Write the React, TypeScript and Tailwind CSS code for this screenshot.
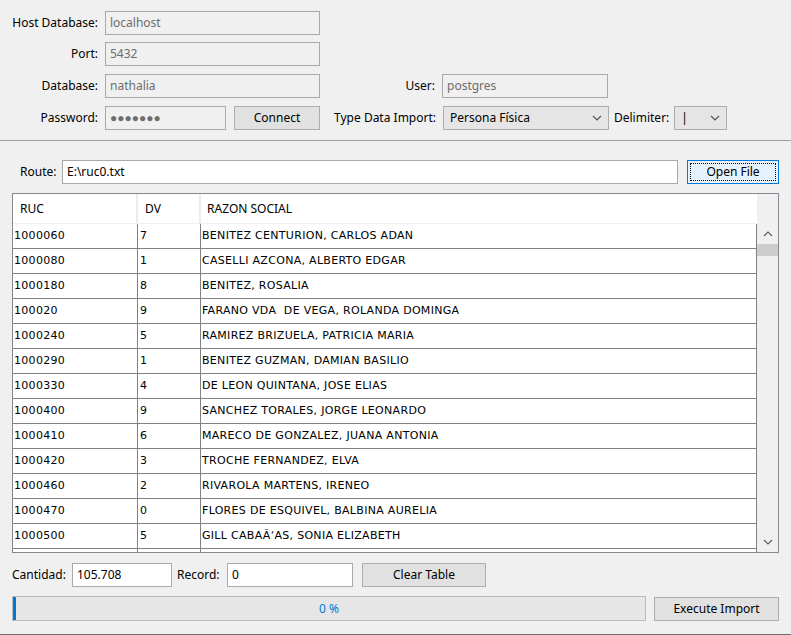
import React from "react";

const rows: [string, string, string][] = [
  ["1000060", "7", "BENITEZ CENTURION, CARLOS ADAN"],
  ["1000080", "1", "CASELLI AZCONA, ALBERTO EDGAR"],
  ["1000180", "8", "BENITEZ, ROSALIA"],
  ["100020", "9", "FARANO VDA  DE VEGA, ROLANDA DOMINGA"],
  ["1000240", "5", "RAMIREZ BRIZUELA, PATRICIA MARIA"],
  ["1000290", "1", "BENITEZ GUZMAN, DAMIAN BASILIO"],
  ["1000330", "4", "DE LEON QUINTANA, JOSE ELIAS"],
  ["1000400", "9", "SANCHEZ TORALES, JORGE LEONARDO"],
  ["1000410", "6", "MARECO DE GONZALEZ, JUANA ANTONIA"],
  ["1000420", "3", "TROCHE FERNANDEZ, ELVA"],
  ["1000460", "2", "RIVAROLA MARTENS, IRENEO"],
  ["1000470", "0", "FLORES DE ESQUIVEL, BALBINA AURELIA"],
  ["1000500", "5", "GILL CABAÃ‘AS, SONIA ELIZABETH"],
  ["", "", ""], // next row, only its top edge shows
];

// small chevron used by combos and the scrollbar
function Chevron({ up = false, className = "" }: { up?: boolean; className?: string }) {
  return (
    <svg width="10" height="6" viewBox="0 0 10 6" className={className}>
      <path
        d={up ? "M1 5 L5 1 L9 5" : "M1 1 L5 5 L9 1"}
        fill="none"
        stroke="currentColor"
        strokeWidth="1.2"
      />
    </svg>
  );
}

function Label({ text, w }: { text: string; w: string }) {
  return <div className={`${w} shrink-0 text-right pr-[7px] leading-6`}>{text}</div>;
}

function Field({ value, w, disabled = false }: { value: string; w: string; disabled?: boolean }) {
  return (
    <div
      className={`${w} h-6 shrink-0 border px-[4px] leading-[22px] ${
        disabled ? "border-[#a9a9a9] bg-[#f0f0f0] text-[#6d6d6d]" : "border-[#a9a9a9] bg-white text-black"
      }`}
    >
      {value}
    </div>
  );
}

function Button({ text, w, className = "" }: { text: string; w: string; className?: string }) {
  return (
    <div
      className={`${w} h-6 shrink-0 border border-[#adadad] bg-[#e1e1e1] text-center leading-[22px] ${className}`}
    >
      {text}
    </div>
  );
}

function Combo({ value, w }: { value: string; w: string }) {
  return (
    <div
      className={`${w} h-6 shrink-0 border border-[#acacac] bg-[#e5e5e5] flex items-center pl-[6px] pr-[6px]`}
    >
      <span className="flex-1">{value}</span>
      <Chevron className="text-[#555]" />
    </div>
  );
}

export default function App() {
  return (
    <div
      className="w-[791px] h-[635px] bg-[#f0f0f0] text-[12px] text-black overflow-hidden border-b border-[#6e6e6e]"
      style={{ fontFamily: '"Noto Sans", "Segoe UI", sans-serif' }}
    >
      {/* connection panel */}
      <div className="pt-[11px] pb-[10px] border-b border-[#a0a0a0] flex flex-col gap-[8px]">
        <div className="flex">
          <Label text="Host Database:" w="w-[105px]" />
          <Field value="localhost" w="w-[215px]" disabled />
        </div>
        <div className="flex -mt-[1px]">
          <Label text="Port:" w="w-[105px]" />
          <Field value="5432" w="w-[215px]" disabled />
        </div>
        <div className="flex">
          <Label text="Database:" w="w-[105px]" />
          <Field value="nathalia" w="w-[215px]" disabled />
          <Label text="User:" w="w-[122px]" />
          <Field value="postgres" w="w-[166px]" disabled />
        </div>
        <div className="flex">
          <Label text="Password:" w="w-[105px]" />
          <Field value="●●●●●●●" w="w-[121px]" disabled />
          <Button text="Connect" w="w-[86px]" className="ml-[8px]" />
          <Label text="Type Data Import:" w="w-[123px]" />
          <Combo value="Persona Física" w="w-[166px]" />
          <div className="ml-[5px] pr-[5px] leading-6">Delimiter:</div>
          <Combo value="|" w="w-[53px]" />
        </div>
      </div>

      {/* route */}
      <div className="flex items-center mt-[19px] pl-[20px]">
        <div className="w-[42px] leading-6">Route:</div>
        <Field value="E:\ruc0.txt" w="w-[616px]" />
        <div className="ml-[9px] w-[92px] h-6 border border-[#0078d7] bg-[#e5f1fb] p-[2px]">
          <div className="h-full border border-dotted border-black text-center leading-[16px]">Open File</div>
        </div>
      </div>

      {/* table */}
      <div className="mx-[12px] mt-[9px] h-[360px] border border-[#828790] flex bg-white">
        <div className="w-[744px] flex flex-col">
          <div className="h-[30px] flex border-b border-[#f0f0f0] shrink-0">
            <div className="w-[125px] pl-[7px] leading-[30px] border-r-2 border-[#ebebeb]">RUC</div>
            <div className="w-[63px] pl-[7px] leading-[30px] border-r-2 border-[#ebebeb]">DV</div>
            <div className="flex-1 pl-[6px] leading-[30px]">RAZON SOCIAL</div>
          </div>
          <div
            className="flex-1 overflow-hidden border-r border-[#808080] text-[11px] tracking-[0.3px]"
            style={{ fontFamily: '"DejaVu Sans", Tahoma, sans-serif' }}
          >
            {rows.map((r, i) => (
              <div key={i} className="h-[25px] flex border-b border-[#808080] shrink-0">
                <div className="w-[125px] pl-[1px] leading-[24px] border-r border-[#808080]">{r[0]}</div>
                <div className="w-[63px] pl-[2px] leading-[24px] border-r border-[#808080]">{r[1]}</div>
                <div className="flex-1 pl-[1px] leading-[24px] whitespace-pre">{r[2]}</div>
              </div>
            ))}
          </div>
        </div>
        <div className="flex-1 bg-[#f0f0f0] flex flex-col">
          <div className="h-[30px]" />
          <div className="h-[20px] flex items-center justify-center text-[#606060]">
            <Chevron up />
          </div>
          <div className="h-[12px] bg-[#cdcdcd]" />
          <div className="flex-1" />
          <div className="h-[20px] flex items-center justify-center text-[#606060]">
            <Chevron />
          </div>
        </div>
      </div>

      {/* counters */}
      <div className="flex items-center mt-[10px] pl-[12px]">
        <div className="w-[60px] leading-6">Cantidad:</div>
        <Field value="105.708" w="w-[100px]" />
        <div className="ml-[5px] w-[50px] leading-6">Record:</div>
        <Field value="0" w="w-[126px]" />
        <Button text="Clear Table" w="w-[124px]" className="ml-[9px] -mt-[1px]" />
      </div>

      {/* progress */}
      <div className="flex items-center mt-[8px] pl-[12px]">
        <div className="w-[634px] h-[25px] border border-[#bcbcbc] bg-[#e6e6e6] flex relative">
          <div className="w-[3px] h-full bg-[#0078d7]" />
          <div className="absolute inset-0 text-center leading-[23px] text-[#0078d7]">0 %</div>
        </div>
        <Button text="Execute Import" w="w-[125px]" className="ml-[8px] mt-[2px]" />
      </div>
    </div>
  );
}
